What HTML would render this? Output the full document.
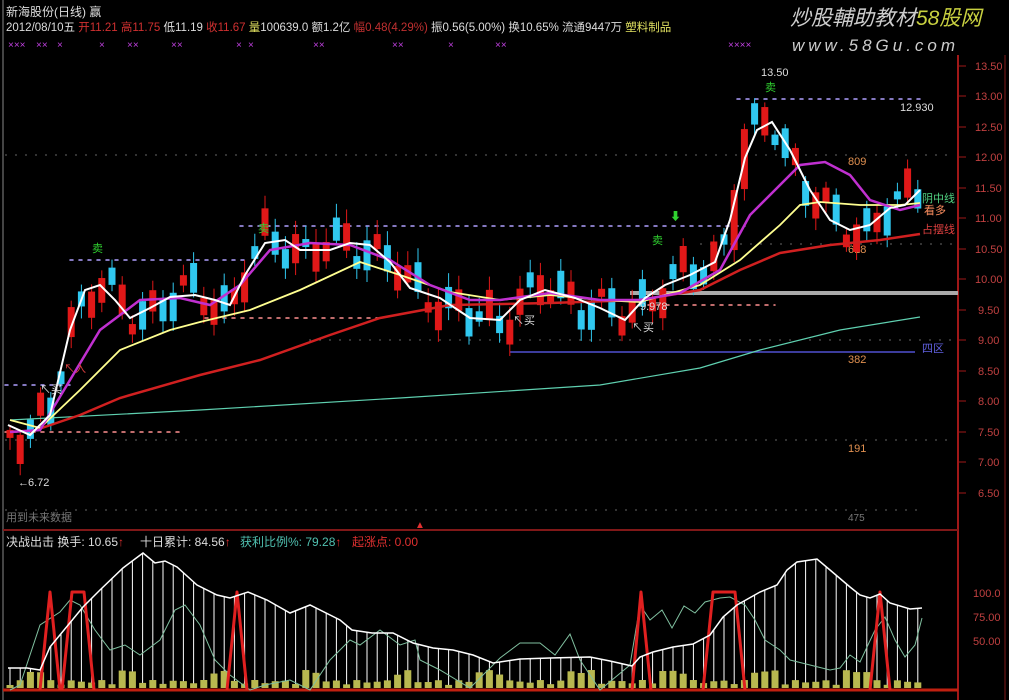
<!DOCTYPE html>
<html><head><meta charset="utf-8"><style>
html,body{margin:0;padding:0;background:#000;width:1009px;height:700px;overflow:hidden}
svg{display:block}
text{font-family:"Liberation Sans","Noto Sans CJK SC",sans-serif}
</style></head><body>
<svg id="s" width="1009" height="700" viewBox="0 0 1009 700" xmlns="http://www.w3.org/2000/svg">
<rect width="1009" height="700" fill="#000"/>
<line x1="3" y1="0" x2="3" y2="700" stroke="#444" stroke-width="2"/>
<line x1="958" y1="55" x2="958" y2="700" stroke="#a01818" stroke-width="2"/>
<line x1="1005" y1="55" x2="1005" y2="700" stroke="#801818" stroke-width="1"/>
<line x1="3" y1="530" x2="958" y2="530" stroke="#801818" stroke-width="2"/>
<line x1="3" y1="690" x2="958" y2="690" stroke="#c02010" stroke-width="3"/>
<text x="6" y="16" font-size="12" fill="#ddd">新海股份(日线) 赢</text>
<text x="6" y="31" font-size="11.5" fill="#ddd">2012/08/10五 <tspan fill="#d03030">开11.21 高11.75</tspan> 低11.19 <tspan fill="#d03030">收11.67</tspan> <tspan fill="#e0e060">量</tspan>100639.0 额1.2亿 <tspan fill="#c03030">幅0.48(4.29%)</tspan> 振0.56(5.00%) 换10.65% 流通9447万 <tspan fill="#e0e060">塑料制品</tspan></text>
<text x="790" y="25" font-size="21" fill="#ccc" font-style="italic">炒股輔助教材<tspan fill="#c8d040">58股网</tspan></text>
<text x="792" y="51" font-size="17" fill="#ccc" font-style="italic" letter-spacing="4">www.58Gu.com</text>
<g font-size="10" fill="#c040e0">
<text x="8" y="48">×××</text><text x="36" y="48">××</text><text x="57" y="48">×</text><text x="99" y="48">×</text><text x="127" y="48">××</text><text x="171" y="48">××</text><text x="236" y="48">×</text><text x="248" y="48">×</text><text x="313" y="48">××</text><text x="392" y="48">××</text><text x="448" y="48">×</text><text x="495" y="48">××</text><text x="728" y="48">××××</text>
</g>
<g font-size="11" fill="#c04040">
<text x="975" y="70">13.50</text><text x="975" y="100">13.00</text><text x="975" y="131">12.50</text><text x="975" y="161">12.00</text><text x="975" y="192">11.50</text><text x="975" y="222">11.00</text><text x="975" y="253">10.50</text><text x="975" y="283">10.00</text><text x="978" y="314">9.50</text><text x="978" y="344">9.00</text><text x="978" y="375">8.50</text><text x="978" y="405">8.00</text><text x="978" y="436">7.50</text><text x="978" y="466">7.00</text><text x="978" y="497">6.50</text>
<text x="973" y="597">100.0</text><text x="973" y="621">75.00</text><text x="973" y="645">50.00</text>
</g>
<g stroke="#a01818"><line x1="958" y1="66" x2="966" y2="66"/><line x1="958" y1="96" x2="966" y2="96"/><line x1="958" y1="127" x2="966" y2="127"/><line x1="958" y1="157" x2="966" y2="157"/><line x1="958" y1="188" x2="966" y2="188"/><line x1="958" y1="218" x2="966" y2="218"/><line x1="958" y1="249" x2="966" y2="249"/><line x1="958" y1="279" x2="966" y2="279"/><line x1="958" y1="310" x2="966" y2="310"/><line x1="958" y1="340" x2="966" y2="340"/><line x1="958" y1="371" x2="966" y2="371"/><line x1="958" y1="401" x2="966" y2="401"/><line x1="958" y1="432" x2="966" y2="432"/><line x1="958" y1="462" x2="966" y2="462"/><line x1="958" y1="493" x2="966" y2="493"/></g>
<g stroke="#666" stroke-dasharray="2,8">
<line x1="5" y1="155" x2="955" y2="155"/><line x1="309" y1="340" x2="955" y2="340"/><line x1="5" y1="440" x2="955" y2="440"/><line x1="5" y1="510" x2="920" y2="510"/><line x1="700" y1="244" x2="955" y2="244"/>
</g>
<g font-size="11" fill="#e09050"><text x="848" y="165">809</text><text x="848" y="253">618</text><text x="848" y="363">382</text><text x="848" y="452">191</text></g>
<text x="848" y="521" font-size="10" fill="#777">475</text>
<text x="6" y="521" font-size="11" fill="#777">用到未来数据</text>
<line x1="510" y1="352" x2="915" y2="352" stroke="#5050d0" stroke-width="1.5"/>
<text x="922" y="352" font-size="11" fill="#6060e0">四区</text>
<rect x="630" y="291" width="328" height="4" fill="#aaa"/>
<g stroke="#b0a0ff" stroke-width="1.5" stroke-dasharray="3,6" stroke-linecap="round">
<line x1="737" y1="99" x2="920" y2="99"/><line x1="240" y1="226" x2="745" y2="226"/><line x1="70" y1="260" x2="245" y2="260"/><line x1="5" y1="385" x2="70" y2="385"/>
</g>
<g stroke="#ff9090" stroke-width="1.5" stroke-dasharray="3,6" stroke-linecap="round">
<line x1="205" y1="318" x2="380" y2="318"/><line x1="630" y1="305" x2="775" y2="305"/><line x1="5" y1="432" x2="185" y2="432"/>
</g>
<g id="candles"></g>
<polyline fill="none" stroke="#5fd0b0" stroke-width="1.2" points="10,420 200,410 400,398 600,385 700,368 760,350 840,330 920,317"/>
<polyline fill="none" stroke="#d02020" stroke-width="2.5" points="30,432 80,415 120,398 200,375 260,360 330,335 380,318 450,305 550,303 640,300 700,290 740,270 780,253 830,245 880,240 920,234"/>
<polyline fill="none" stroke="#ffff90" stroke-width="1.8" points="10,420 40,428 80,390 120,350 170,330 200,322 250,310 300,290 360,262 400,275 450,292 500,300 550,295 600,300 640,302 700,285 740,260 780,225 800,205 820,202 860,205 900,205 920,203"/>
<polyline fill="none" stroke="#c030d0" stroke-width="2.5" points="10,432 40,430 70,380 100,330 140,300 180,298 210,305 240,285 270,250 310,243 350,245 390,260 430,285 470,300 500,300 550,293 600,300 640,300 680,293 720,270 750,215 780,185 800,165 825,162 850,175 870,200 900,210 920,205"/>
<polyline fill="none" stroke="#fff" stroke-width="2" points="8,425 30,435 50,415 70,330 85,290 100,285 115,300 130,318 150,308 170,297 195,295 215,300 230,305 245,275 265,243 285,240 300,250 330,250 350,243 370,245 390,262 410,288 440,298 470,318 500,320 520,300 545,290 575,298 600,308 625,320 645,298 665,285 690,275 715,262 730,220 745,158 757,130 772,122 790,150 810,190 830,220 850,230 870,225 890,208 905,205 920,190"/>
<g font-size="11">
<text x="92" y="252" fill="#30d030">卖</text><text x="258" y="232" fill="#30d030">卖</text><text x="652" y="244" fill="#30d030">卖</text><text x="765" y="91" fill="#30d030">卖</text>
<text x="670" y="220" fill="#30d030">⬇</text>
<text x="761" y="76" fill="#ddd">13.50</text><text x="900" y="111" fill="#ddd">12.930</text>
<text x="28" y="486" fill="#ddd">6.72</text><text x="18" y="486" fill="#ddd">←</text>
<text x="513" y="324" fill="#ddd">↖买</text><text x="632" y="331" fill="#ddd">↖买</text><text x="640" y="310" fill="#ddd">9.978</text>
<text x="64" y="372" fill="#e04040">↖入</text><text x="40" y="393" fill="#ddd">↖买</text>
<text x="922" y="202" fill="#50d080">阴中线</text><text x="924" y="214" fill="#ff9060">看多</text><text x="922" y="233" fill="#e04040">占摆线</text>
</g>
<g font-size="12"><text x="6" y="546" fill="#ddd">决战出击  换手: 10.65<tspan fill="#e03030">↑</tspan></text>
<text x="140" y="546" fill="#ddd">十日累计: 84.56<tspan fill="#e03030">↑</tspan></text>
<text x="240" y="546" fill="#50c0b0">获利比例%: 79.28<tspan fill="#e03030">↑</tspan></text>
<text x="352" y="546" fill="#e03030">起涨点: 0.00</text></g>
<g id="hist"></g>
<polyline fill="none" stroke="#80c0a0" stroke-width="1" points="10,690 20,685 40,625 60,612 70,600 80,605 95,630 110,650 125,645 140,655 160,640 175,610 185,605 200,625 215,660 230,675 250,690 265,685 290,680 310,690 330,660 350,640 360,645 380,630 400,645 415,640 420,660 440,670 470,688 500,658 520,643 540,643 555,655 570,634 580,660 600,690 630,665 640,605 650,620 662,610 672,628 684,606 695,613 705,602 720,598 730,597 745,605 755,620 765,640 780,650 790,660 810,665 830,670 840,668 850,655 860,662 875,630 885,617 895,640 905,657 915,645 922,618"/>
<g fill="none" stroke="#e02020" stroke-width="3" stroke-linejoin="round">
<polyline points="40,690 50,592 60,690"/><polyline points="62,690 72,592 84,592 94,690"/><polyline points="227,690 237,592 247,690"/><polyline points="632,690 641,592 651,690"/><polyline points="703,690 713,592 735,592 745,690"/><polyline points="870,690 880,592 890,690"/>
</g>
<polyline id="wc" fill="none" stroke="#fff" stroke-width="1.5" points="8,668 27,668 40,670 50,647 83,607 100,590 123,568 143,553 155,563 165,561 177,567 197,585 217,595 230,598 248,592 267,600 290,613 310,605 340,620 352,630 372,633 393,633 413,643 433,648 453,650 473,655 493,663 520,659 550,658 590,657 610,661 632,666 640,657 653,652 673,647 693,644 710,635 723,617 737,605 760,592 777,585 787,570 797,562 817,559 830,570 850,587 860,595 870,598 880,594 890,603 910,609 922,608"/>
<text x="415" y="528" font-size="10" fill="#e03030">▲</text>
</svg>
<script>
(function(){
var NS="http://www.w3.org/2000/svg";
function pts(str){return str.trim().split(/\s+/).map(function(p){var a=p.split(",");return[+a[0],+a[1]];});}
function interp(P,x){for(var i=0;i<P.length-1;i++){if(x>=P[i][0]&&x<=P[i+1][0]){var t=(x-P[i][0])/(P[i+1][0]-P[i][0]);return P[i][1]+t*(P[i+1][1]-P[i][1]);}}return x<P[0][0]?P[0][1]:P[P.length-1][1];}
var white=pts(document.querySelector('polyline[stroke="#fff"][stroke-width="2"]').getAttribute('points'));
var g=document.getElementById('candles');
function el(n,a){var e=document.createElementNS(NS,n);for(var k in a)e.setAttribute(k,a[k]);return e;}
for(var x=10,i=0;x<=920;x+=10.2,i++){
 var c=interp(white,x)+Math.sin(i*1.7)*14+Math.cos(i*0.9)*8;
 var up=Math.sin(i*2.3+0.5)>-0.1;
 var body=8+Math.abs(Math.sin(i*1.3))*22;
 if(x>725&&x<750)body=60;
 var top=c-body/2, h=body;
 var col=up?"#e01818":"#30c8f0";
 var wt=top-4-Math.abs(Math.sin(i*3.1))*10, wb=top+h+4+Math.abs(Math.cos(i*2.7))*8;
 g.appendChild(el('line',{x1:x,y1:wt,x2:x,y2:wb,stroke:col,'stroke-width':1}));
 g.appendChild(el('rect',{x:x-3.5,y:top,width:7,height:h,fill:col}));
}
var wc=pts(document.getElementById('wc').getAttribute('points'));
var h=document.getElementById('hist');
for(var x=10,i=0;x<=922;x+=10.2,i++){
 var y=interp(wc,x);
 h.appendChild(el('line',{x1:x,y1:y,x2:x,y2:688,stroke:'#fff','stroke-width':1}));
 var vh=3+Math.abs(Math.sin(i*1.9))*5+(Math.sin(i*0.7)>0.7?10:0);
 h.appendChild(el('rect',{x:x-3.5,y:688-vh,width:7,height:vh,fill:'#b8b850'}));
}
})();
</script>
</body></html>
